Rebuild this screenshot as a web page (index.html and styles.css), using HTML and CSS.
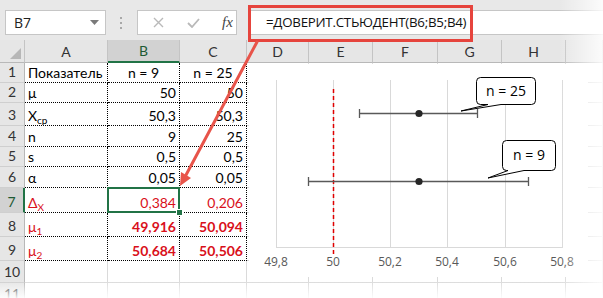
FILE: index.html
```html
<!DOCTYPE html>
<html lang="ru">
<head>
<meta charset="UTF-8">
<title>ДОВЕРИТ.СТЬЮДЕНТ</title>
<link rel="stylesheet" href="styles.css">
</head>
<body>
<div class="app">
  <!-- строка формул -->
  <div class="formula-bar">
    <div class="name-box">
      <span>B7</span>
      <svg class="dd" width="9" height="5" viewBox="0 0 9 5"><path d="M0 0H9L4.5 5Z" fill="#7a7a7a"/></svg>
    </div>
    <div class="grip">
      <svg width="3" height="12" viewBox="0 0 3 12"><rect x="0" y="0" width="2" height="2" fill="#a8a8a8"/><rect x="0" y="5" width="2" height="2" fill="#a8a8a8"/><rect x="0" y="10" width="2" height="2" fill="#a8a8a8"/></svg>
    </div>
    <div class="fx-box">
      <svg class="ic" width="11" height="11" viewBox="0 0 11 11"><path d="M1 1L10 10M10 1L1 10" stroke="#b9b9b9" stroke-width="1.4"/></svg>
      <svg class="ic" width="13" height="10" viewBox="0 0 13 10"><path d="M1 5L5 9L12 1" stroke="#b9b9b9" stroke-width="1.8" fill="none"/></svg>
      <span class="fx">fx</span>
    </div>
    <div class="formula">=ДОВЕРИТ.СТЬЮДЕНТ(B6;B5;B4)</div>
  </div>
  <div class="mark"></div>

  <!-- лист -->
  <table class="sheet">
    <colgroup>
      <col class="w-rh"><col class="w-a"><col class="w-b"><col class="w-c"><col class="w-d">
      <col class="w-e"><col class="w-f"><col class="w-g"><col class="w-h"><col class="w-i">
    </colgroup>
    <tr class="hdr">
      <th class="corner"></th><th>A</th><th class="sel">B</th><th>C</th><th>D</th>
      <th>E</th><th>F</th><th>G</th><th>H</th><th></th>
    </tr>
    <tr class="h20">
      <th class="rh">1</th><td class="t">Показатель</td><td class="t c">n = 9</td><td class="t c">n = 25</td>
      <td></td><td></td><td></td><td></td><td></td><td></td>
    </tr>
    <tr class="h20">
      <th class="rh">2</th><td class="t">μ</td><td class="t n">50</td><td class="t n">50</td>
      <td></td><td></td><td></td><td></td><td></td><td></td>
    </tr>
    <tr class="h23">
      <th class="rh">3</th><td class="t">X<sub>ср</sub></td><td class="t n">50,3</td><td class="t n">50,3</td>
      <td></td><td></td><td></td><td></td><td></td><td></td>
    </tr>
    <tr class="h21">
      <th class="rh">4</th><td class="t">n</td><td class="t n">9</td><td class="t n">25</td>
      <td></td><td></td><td></td><td></td><td></td><td></td>
    </tr>
    <tr class="h20">
      <th class="rh">5</th><td class="t">s</td><td class="t n">0,5</td><td class="t n">0,5</td>
      <td></td><td></td><td></td><td></td><td></td><td></td>
    </tr>
    <tr class="h21">
      <th class="rh">6</th><td class="t">α</td><td class="t n">0,05</td><td class="t n">0,05</td>
      <td></td><td></td><td></td><td></td><td></td><td></td>
    </tr>
    <tr class="h25">
      <th class="rh sel">7</th><td class="t red">Δ<sub>X</sub></td><td class="t n red active">0,384</td><td class="t n red">0,206</td>
      <td></td><td></td><td></td><td></td><td></td><td></td>
    </tr>
    <tr class="h24">
      <th class="rh">8</th><td class="t red">μ<sub>1</sub></td><td class="t n red b">49,916</td><td class="t n red b">50,094</td>
      <td></td><td></td><td></td><td></td><td></td><td></td>
    </tr>
    <tr class="h24">
      <th class="rh">9</th><td class="t red">μ<sub>2</sub></td><td class="t n red b">50,684</td><td class="t n red b">50,506</td>
      <td></td><td></td><td></td><td></td><td></td><td></td>
    </tr>
    <tr class="h22">
      <th class="rh">10</th><td></td><td></td><td></td><td></td><td></td><td></td><td></td><td></td><td></td>
    </tr>
    <tr class="h22">
      <th class="rh">11</th><td></td><td></td><td></td><td></td><td></td><td></td><td></td><td></td><td></td>
    </tr>
  </table>

  <!-- диаграмма -->
  <svg class="chart" width="339" height="213" viewBox="0 0 339 213">
    <rect width="339" height="213" fill="#fff"/>
    <g stroke="#d9d9d9" stroke-width="1">
      <path d="M27.5 16V183M84.5 16V183M141.5 16V183M198.5 16V183M256.5 16V183M313.5 16V183"/>
      <path d="M27 183.5H314"/>
    </g>
    <path d="M84.5 25V193" stroke="#e00000" stroke-width="1.5" stroke-dasharray="4 3"/>
    <g stroke="#595959" stroke-width="1.3">
      <path d="M110 49.5H229M110.5 45V54M228.5 45V54"/>
      <path d="M59 117.5H280M59.5 113V122M279.5 113V122"/>
    </g>
    <circle cx="170" cy="49.5" r="3.6" fill="#262626"/>
    <circle cx="170" cy="117.5" r="3.6" fill="#262626"/>
    <g class="tick" fill="#595959" text-anchor="middle">
      <text x="27" y="202">49,8</text>
      <text x="84" y="202">50</text>
      <text x="141" y="202">50,2</text>
      <text x="198" y="202">50,4</text>
      <text x="256" y="202">50,6</text>
      <text x="313" y="202">50,8</text>
    </g>
    <path d="M231.5 13.5H282.5Q286.5 13.5 286.5 17.5V36.5Q286.5 40.5 282.5 40.5H252L212 47L239 40.5H231.5Q227.5 40.5 227.5 36.5V17.5Q227.5 13.5 231.5 13.5Z" fill="#fff" stroke="#000" stroke-width="1"/>
    <path d="M257.5 76.5H302.5Q306.5 76.5 306.5 80.5V102.5Q306.5 106.5 302.5 106.5H275L239 114L259 106.5H257.5Q253.5 106.5 253.5 102.5V80.5Q253.5 76.5 257.5 76.5Z" fill="#fff" stroke="#000" stroke-width="1"/>
    <text class="lbl" x="257" y="32" text-anchor="middle">n = 25</text>
    <text class="lbl" x="280" y="96" text-anchor="middle">n = 9</text>
  </svg>

  <!-- стрелка -->
  <svg class="arrow" width="603" height="298" viewBox="0 0 603 298">
    <path d="M257 42L186 175" stroke="#e8544a" stroke-width="3" stroke-linecap="round"/>
    <polygon points="180,186 191,178 181,172" fill="#e8544a"/>
  </svg>

  <div class="fade-r"></div>
  <div class="fade-b"></div>
</div>
</body>
</html>
```

FILE: styles.css
```css
body {
    margin: 0;
    padding: 0;
    background: #fff;
    font-family: "Lato", "Open Sans", sans-serif;
}

.app {
    position: relative;
    width: 603px;
    height: 298px;
    overflow: hidden;
    background: #fff;
}

/* строка формул */
.formula-bar {
    display: flex;
    align-items: flex-start;
    height: 40px;
    padding: 10px 0 0 5px;
    box-sizing: border-box;
    background: #e8e8e8;
}

.name-box {
    display: flex;
    align-items: center;
    justify-content: space-between;
    width: 101px;
    height: 25px;
    padding: 0 6px 0 8px;
    box-sizing: border-box;
    background: #fff;
    border: 1px solid #c6c6c6;
    font-family: "Open Sans", sans-serif;
    font-size: 14px;
    color: #222;
}

.grip {
    display: flex;
    align-items: center;
    justify-content: center;
    width: 31px;
    height: 25px;
}

.fx-box {
    display: flex;
    align-items: center;
    width: 100px;
    height: 25px;
    padding: 0 0 0 15px;
    box-sizing: border-box;
    background: #fff;
    border: 1px solid #c6c6c6;
}

.fx-box .ic {
    margin-right: 23px;
}

.fx-box .ic + .ic {
    margin-right: 22px;
}

.fx {
    font-family: "Liberation Serif", serif;
    font-style: italic;
    font-size: 15px;
    color: #444;
}

.formula {
    flex: 1;
    height: 25px;
    margin-left: 11px;
    padding-left: 18px;
    box-sizing: border-box;
    background: #fff;
    border-top: 1px solid #c6c6c6;
    border-bottom: 1px solid #c6c6c6;
    font-family: "Open Sans", sans-serif;
    font-size: 13.3px;
    letter-spacing: -0.25px;
    line-height: 23px;
    color: #111;
}

.mark {
    position: absolute;
    left: 248px;
    top: 5px;
    width: 225px;
    height: 37px;
    box-sizing: border-box;
    border: 3px solid #e6443d;
}

/* лист */
.sheet {
    table-layout: fixed;
    border-collapse: separate;
    border-spacing: 0;
    width: 603px;
    font-size: 14px;
    color: #000;
}

.w-rh { width: 25px; }
.w-a { width: 83px; }
.w-b { width: 72px; }
.w-c { width: 67px; }
.w-d { width: 62px; }
.w-e { width: 64px; }
.w-f { width: 65px; }
.w-g { width: 64px; }
.w-h { width: 64px; }
.w-i { width: 37px; }

.sheet td,
.sheet th {
    padding: 0 3px;
    box-sizing: border-box;
    white-space: nowrap;
    overflow: hidden;
    border-right: 1px solid #dadada;
    border-bottom: 1px solid #dadada;
}

.sheet td {
    vertical-align: bottom;
    padding-bottom: 1px;
}

.hdr { height: 23px; }
.h20 { height: 20px; }
.h21 { height: 21px; }
.h22 { height: 22px; }
.h23 { height: 23px; }
.h24 { height: 24px; }
.h25 { height: 25px; }

.hdr th {
    background: #e6e6e6;
    font-weight: normal;
    color: #333;
    text-align: center;
    border-right: 1px solid #c4c4c4;
    border-bottom: 1px solid #b8b8b8;
}

.hdr th.sel {
    background: #d2d2d2;
    color: #1e5a34;
    border-bottom: 2px solid #217346;
}

.corner {
    position: relative;
}

.corner::after {
    content: "";
    position: absolute;
    right: 3px;
    bottom: 3px;
    border-left: 11px solid transparent;
    border-bottom: 11px solid #b7b7b7;
}

.rh {
    background: #e6e6e6;
    font-weight: normal;
    color: #333;
    text-align: center;
    vertical-align: bottom;
    padding: 0 0 2px 0 !important;
    border-right: 1px solid #b8b8b8 !important;
    border-bottom: 1px solid #cfcfcf !important;
}

.rh.sel {
    background: #d2d2d2;
    color: #1e5a34;
    border-right: 2px solid #217346 !important;
}

.sheet td.t {
    border-right: 1px dotted #000;
    border-bottom: 1px dotted #000;
}

.c { text-align: center; }
.n { text-align: right; }
.red { color: #d9101a; }
.b { font-weight: bold; }

sub {
    font-size: 10px;
    line-height: 0;
    vertical-align: -3px;
}

.sheet td.active {
    position: relative;
    overflow: visible;
}

.active::before {
    content: "";
    position: absolute;
    left: -1px;
    top: -1px;
    right: -1px;
    bottom: -1px;
    border: 2px solid #217346;
}

.active::after {
    content: "";
    position: absolute;
    right: -4px;
    bottom: -4px;
    width: 5px;
    height: 5px;
    background: #217346;
    border: 1px solid #fff;
}

/* диаграмма */
.chart {
    position: absolute;
    left: 249px;
    top: 64px;
}

.tick {
    font-family: "Open Sans", sans-serif;
    font-size: 12px;
}

.lbl {
    font-family: "Open Sans", sans-serif;
    font-size: 14px;
    fill: #000;
}

.arrow {
    position: absolute;
    left: 0;
    top: 0;
    pointer-events: none;
}

.fade-r {
    position: absolute;
    top: 0;
    right: 0;
    width: 44px;
    height: 100%;
    background: linear-gradient(to right, rgba(255,255,255,0), rgba(255,255,255,0.85));
}

.fade-b {
    position: absolute;
    left: 0;
    bottom: 0;
    width: 100%;
    height: 17px;
    background: linear-gradient(to bottom, rgba(255,255,255,0), rgba(255,255,255,0.9));
}
```
